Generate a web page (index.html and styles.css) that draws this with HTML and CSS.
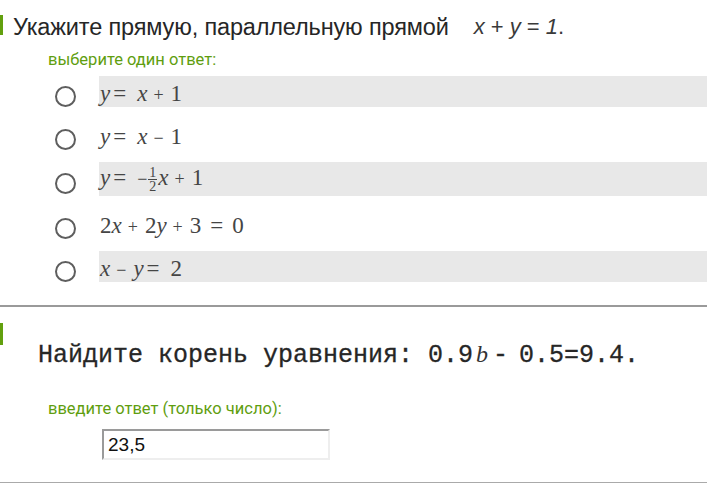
FILE: index.html
```html
<!DOCTYPE html>
<html lang="ru">
<head>
<meta charset="utf-8">
<title>Тест</title>
<link rel="stylesheet" href="styles.css">
</head>
<body>
<section class="q">
  <div class="qhead">
    <span class="bar"></span>
    <span class="qtext">Укажите прямую, параллельную прямой</span>
    <span class="qformula"><i>x</i> + <i>y</i> = <i>1</i>.</span>
  </div>
  <div class="prompt">выберите один ответ:</div>
  <div class="options">
    <label class="opt">
      <span class="radio"></span>
      <span class="ans shade"><i>y</i><span class="eq">=</span><i>x</i><span class="op">+</span>1</span>
    </label>
    <label class="opt">
      <span class="radio"></span>
      <span class="ans"><i>y</i><span class="eq">=</span><i>x</i><span class="op">−</span>1</span>
    </label>
    <label class="opt tall">
      <span class="radio"></span>
      <span class="ans shade"><i>y</i><span class="eq">=</span><span class="neg">−</span><span class="frac"><span class="num">1</span><span class="den">2</span></span><i>x</i><span class="op">+</span>1</span>
    </label>
    <label class="opt">
      <span class="radio"></span>
      <span class="ans">2<i>x</i><span class="op">+</span>2<i>y</i><span class="op">+</span>3<span class="eq2">=</span>0</span>
    </label>
    <label class="opt">
      <span class="radio"></span>
      <span class="ans shade"><i>x</i><span class="op">−</span><i>y</i><span class="eq">=</span>2</span>
    </label>
  </div>
</section>
<hr class="sep">
<section class="q2">
  <div class="qhead2">
    <span class="bar2"></span>
    <span class="task">Найдите корень уравнения: 0.9<i class="var">b</i><span class="dash">-</span><span class="rest">0.5=9.4.</span></span>
  </div>
  <div class="prompt2">введите ответ (только число):</div>
  <input class="answer" type="text" value="23,5">
</section>
<hr class="sep2">
</body>
</html>
```
FILE: styles.css
```css
html, body {
  margin: 0;
  padding: 0;
  background: #fff;
}
body {
  width: 707px;
  font-family: "Liberation Sans", Arial, sans-serif;
  color: #222;
}
.q {
  padding-top: 14px;
}
.qhead {
  display: flex;
  align-items: flex-start;
}
.bar {
  width: 3px;
  height: 20px;
  margin-top: 1px;
  background: #62a00e;
  flex: none;
}
.qtext {
  margin-left: 10px;
  font-size: 23.5px;
  line-height: 26px;
  color: #262626;
  letter-spacing: -0.15px;
}
.qformula {
  margin-left: 25px;
  font-size: 22px;
  line-height: 26px;
  color: #3a3a3a;
}
.qformula i {
  font-style: italic;
}
.prompt {
  margin-top: 10px;
  margin-left: 48px;
  font-family: Roboto, "Liberation Sans", sans-serif;
  font-size: 16.5px;
  line-height: 19px;
  color: #5f9e0f;
}
.options {
  margin-top: 7px;
  display: flex;
  flex-direction: column;
  gap: 12px;
}
.opt {
  display: flex;
  align-items: center;
  margin-left: 55px;
}
.radio {
  flex: none;
  box-sizing: border-box;
  width: 21px;
  height: 21px;
  border: 2px solid #5e5e5e;
  border-radius: 50%;
  background: #fff;
  margin-top: 9px;
  margin-right: 23px;
}
.ans {
  flex: 1;
  box-sizing: border-box;
  height: 31px;
  padding: 5px 0 0 1px;
  line-height: 26px;
  font-family: "Liberation Serif", "Times New Roman", serif;
  font-size: 23px;
  color: #454545;
  white-space: nowrap;
}
.opt.tall .ans {
  height: 34px;
  padding-top: 3px;
}
.shade {
  background: #e8e8e8;
}
.ans i {
  font-style: italic;
}
.eq {
  margin: 0 11px 0 3px;
}
.eq2 {
  margin: 0 9px;
}
.op {
  font-size: 18px;
  margin: 0 7px 0 6px;
}
.neg {
  font-size: 18px;
  margin-right: 1px;
}
.frac {
  display: inline-flex;
  flex-direction: column;
  align-items: center;
  font-size: 14px;
  line-height: 12px;
  vertical-align: middle;
  margin-right: 1px;
}
.num {
  border-bottom: 1px solid #454545;
  padding: 0 1px;
}
.den {
  padding-top: 1px;
}
.sep {
  margin: 23px 0 0;
  border: 0;
  border-top: 2px solid #9a9a9a;
  height: 0;
}
.q2 {
  padding-top: 16px;
}
.qhead2 {
  display: flex;
  align-items: flex-start;
}
.bar2 {
  width: 3px;
  height: 22px;
  background: #62a00e;
  flex: none;
}
.task {
  margin-left: 35px;
  padding-top: 17px;
  font-family: "Liberation Mono", "Courier New", monospace;
  font-size: 25px;
  line-height: 28px;
  font-weight: normal;
  -webkit-text-stroke: 0.3px #2a2a2a;
  color: #262626;
  white-space: pre;
}
.var {
  font-family: "Liberation Serif", serif;
  font-style: italic;
  font-size: 24px;
  margin-left: 3px;
  -webkit-text-stroke: 0;
  color: #333;
}
.dash {
  margin-left: 5px;
}
.rest {
  margin-left: 11px;
}
.prompt2 {
  margin-top: 29px;
  margin-left: 48px;
  font-family: Roboto, "Liberation Sans", sans-serif;
  font-size: 16.5px;
  line-height: 19px;
  color: #5f9e0f;
}
.answer {
  display: block;
  box-sizing: border-box;
  margin: 11px 0 0 102px;
  width: 228px;
  height: 31px;
  padding: 0 0 0 4px;
  border: 2px solid;
  border-color: #9a9a9a #eeeeee #eeeeee #9a9a9a;
  font-family: "Liberation Sans", Arial, sans-serif;
  font-size: 19px;
  color: #111;
  background: #fff;
  outline: none;
}
.sep2 {
  margin: 22px 0 0;
  border: 0;
  border-top: 1px solid #aaaaaa;
  height: 0;
}
```
